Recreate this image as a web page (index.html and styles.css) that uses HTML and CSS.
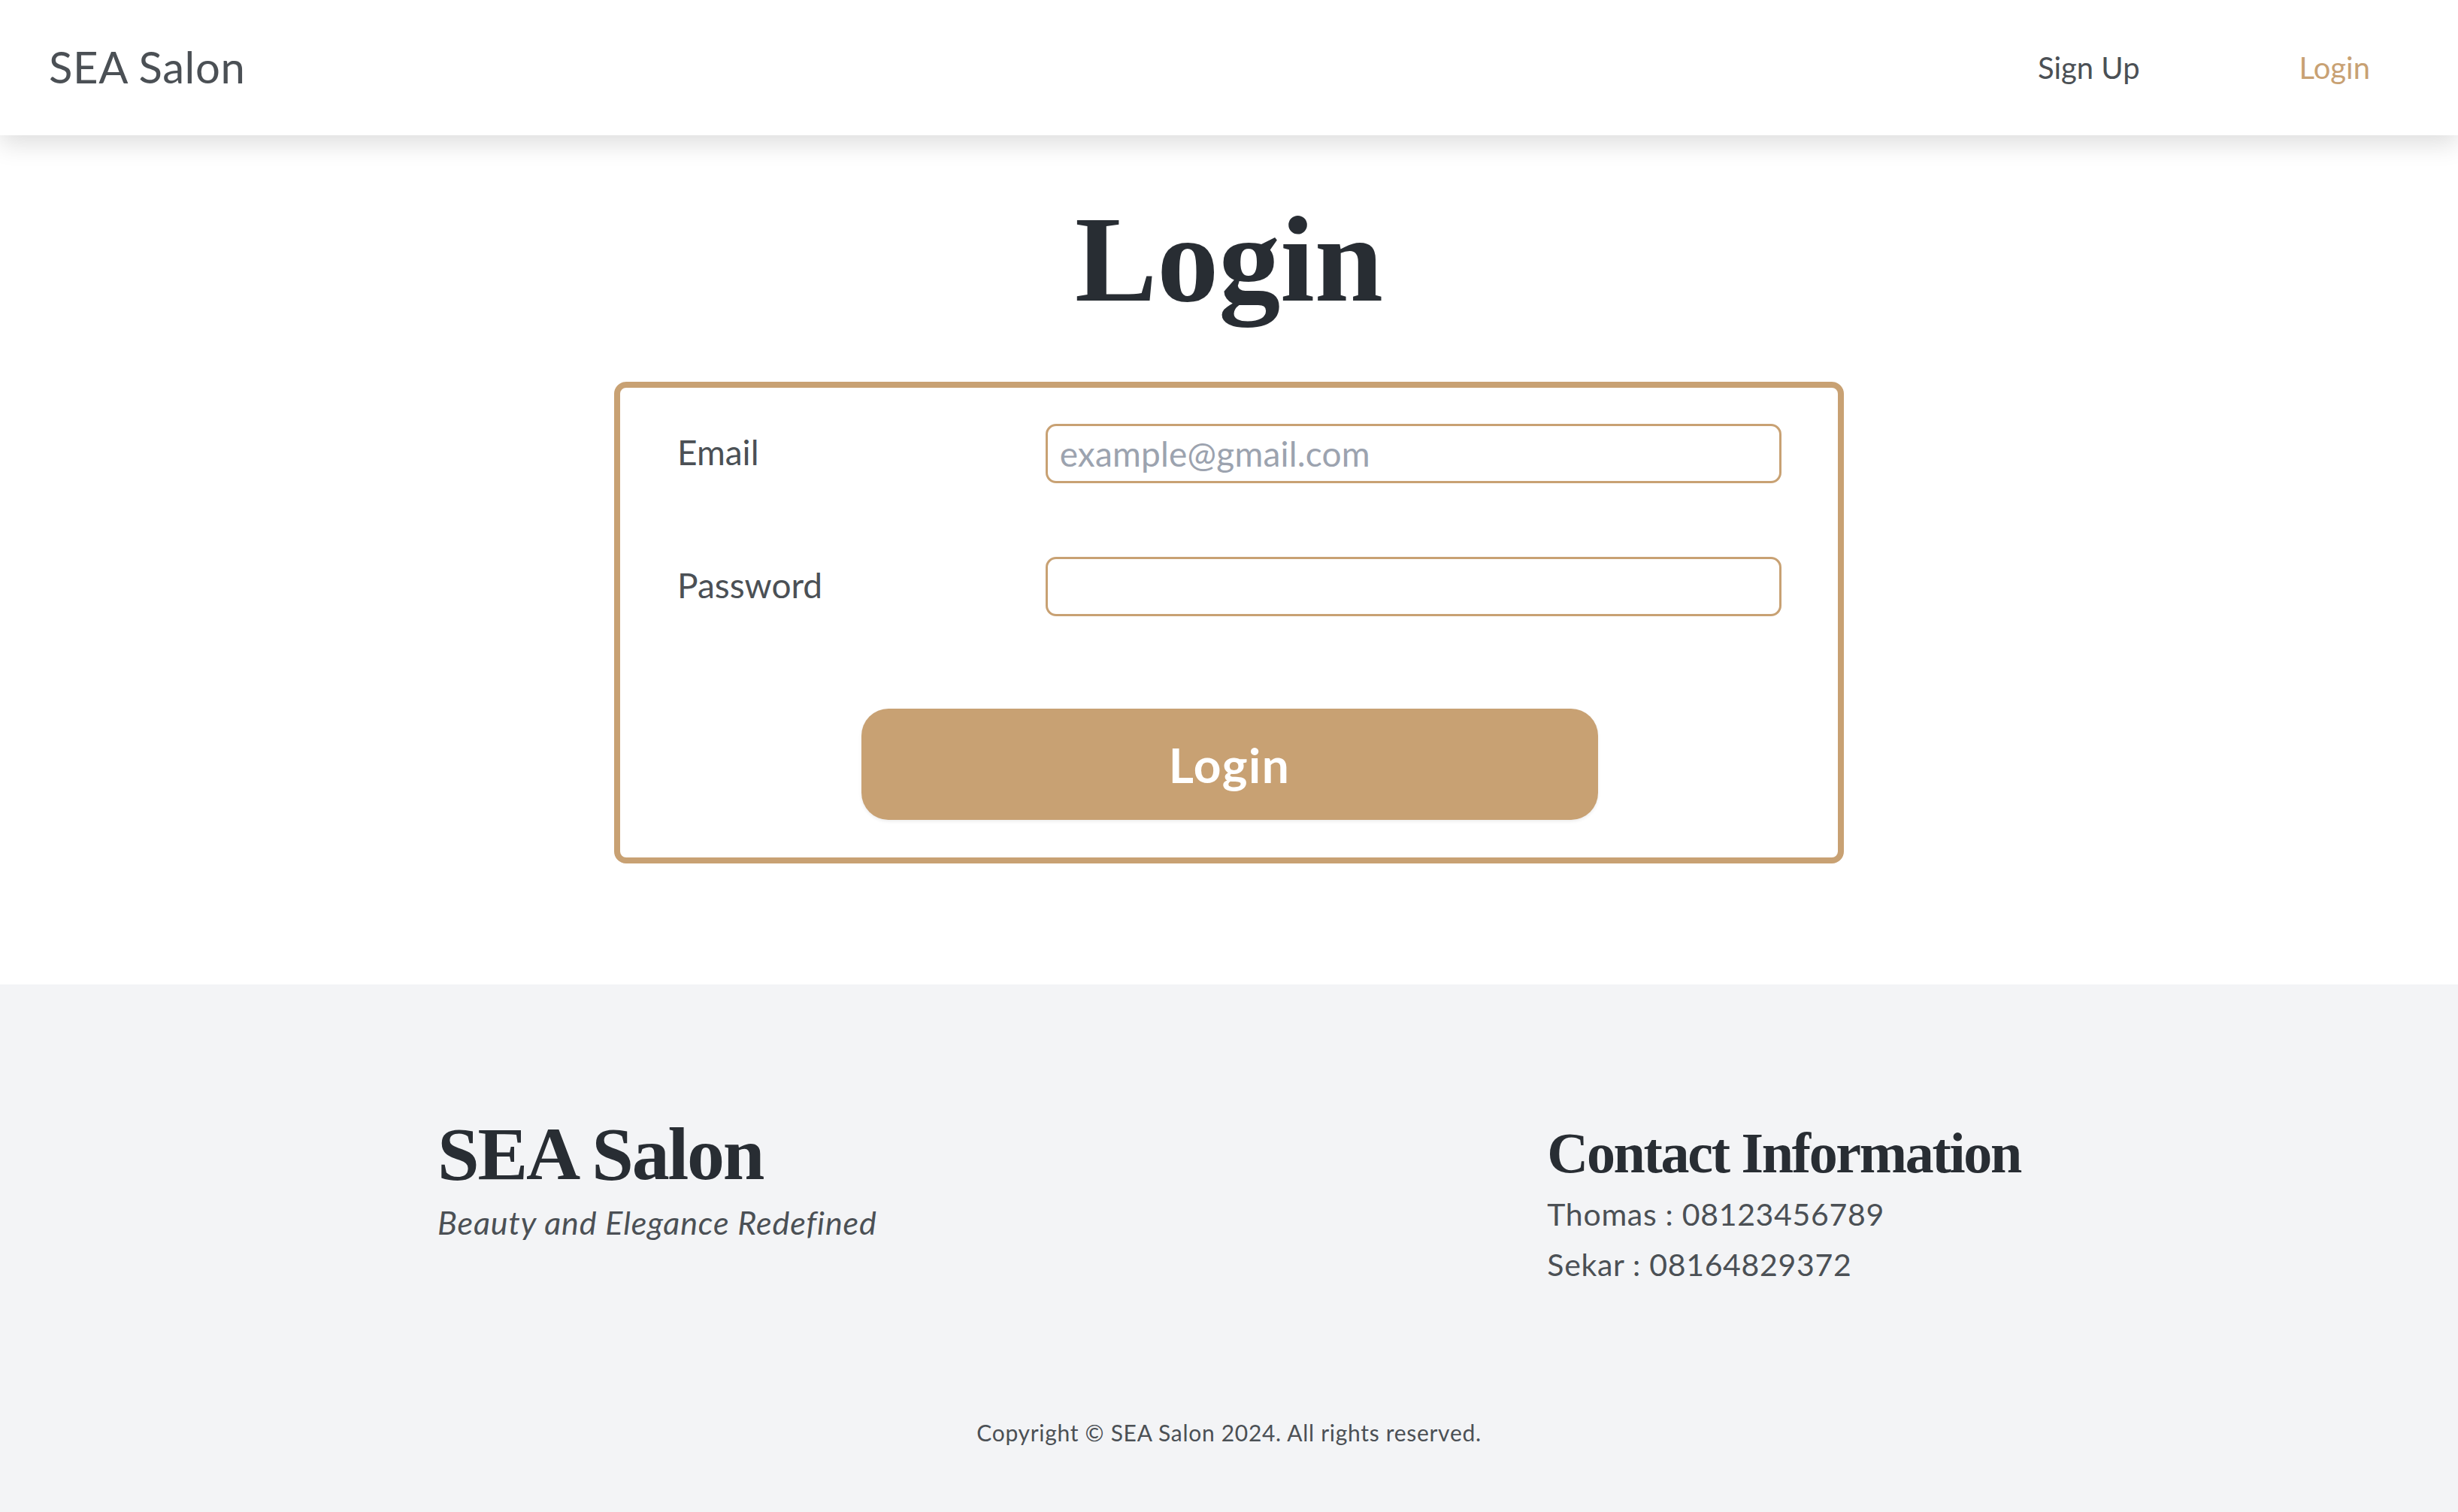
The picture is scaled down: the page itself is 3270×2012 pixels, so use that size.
FILE: index.html
```html
<!DOCTYPE html>
<html lang="en">
<head>
<meta charset="utf-8">
<title>SEA Salon - Login</title>
<link rel="stylesheet" href="styles.css">
</head>
<body>
<header class="nav">
  <a class="brand" href="#">SEA Salon</a>
  <nav class="links">
    <a class="link" href="#">Sign Up</a>
    <a class="link active" href="#">Login</a>
  </nav>
</header>
<main class="main">
  <h1 class="title">Login</h1>
  <form class="card">
    <div class="fields">
      <label class="row">
        <span class="label">Email</span>
        <input class="input" type="email" placeholder="example@gmail.com">
      </label>
      <label class="row">
        <span class="label">Password</span>
        <input class="input" type="password">
      </label>
    </div>
    <button class="btn" type="button">Login</button>
  </form>
</main>
<footer class="footer">
  <div class="footer-cols">
    <div class="about">
      <h2 class="footer-brand">SEA Salon</h2>
      <p class="tagline">Beauty and Elegance Redefined</p>
    </div>
    <div class="contact">
      <h3 class="contact-title">Contact Information</h3>
      <p class="contact-line">Thomas : 08123456789</p>
      <p class="contact-line">Sekar : 08164829372</p>
    </div>
  </div>
  <p class="copyright">Copyright © SEA Salon 2024. All rights reserved.</p>
</footer>
</body>
</html>
```

FILE: styles.css
```css
* { box-sizing: border-box; }
html, body { margin: 0; padding: 0; }
body {
  font-family: Lato, "Open Sans", sans-serif;
  color: #4b5055;
  background: #ffffff;
}
a { text-decoration: none; color: inherit; }

.nav {
  height: 180px;
  display: flex;
  align-items: center;
  justify-content: space-between;
  padding: 0 117px 0 65px;
  background: #fff;
  box-shadow: 0 12px 30px rgba(0, 0, 0, 0.13);
  position: relative;
  z-index: 2;
}
.brand {
  font-size: 58px;
  color: #4b5055;
  letter-spacing: 0.6px;
  line-height: 1;
  margin-top: -3px;
}
.links {
  display: flex;
  gap: 212px;
}
.link {
  font-size: 40px;
  color: #4b5055;
}
.link.active { color: #c8a173; }

.main {
  padding: 83px 0 161px;
}
.title {
  margin: 0 0 81px;
  text-align: center;
  font-family: "Liberation Serif", serif;
  font-weight: 700;
  font-size: 164px;
  line-height: 1;
  color: #282d33;
}
.card {
  width: 1636px;
  margin: 0 auto;
  border: 8px solid #c8a173;
  border-radius: 16px;
  padding: 48px 75px 50px 76px;
}
.fields {
  display: flex;
  flex-direction: column;
  gap: 98px;
}
.row {
  display: grid;
  grid-template-columns: 1fr 2fr;
  align-items: center;
}
.label {
  font-size: 46px;
  color: #4b5055;
  margin-top: -4px;
}
.input {
  height: 79px;
  width: 100%;
  border: 3px solid #c8a173;
  border-radius: 14px;
  padding: 0 16px;
  font-family: Lato, sans-serif;
  font-size: 46px;
  letter-spacing: 0.2px;
  color: #333;
  background: #fff;
  outline: none;
}
.input::placeholder { color: #9ca3af; }
.btn {
  display: block;
  width: 980px;
  height: 148px;
  margin: 123px auto 0;
  border: none;
  border-radius: 36px;
  background: #c8a173;
  color: #fff;
  font-family: Lato, sans-serif;
  font-weight: 700;
  font-size: 64px;
  letter-spacing: 1.5px;
  box-shadow: 0 2px 4px rgba(0,0,0,0.08);
}

.footer {
  background: #f3f4f6;
  padding: 176px 0 85px;
}
.footer-cols {
  width: 2106px;
  margin: 0 auto;
  display: flex;
  justify-content: space-between;
  align-items: flex-start;
}
.footer-brand {
  margin: 0;
  font-family: "Liberation Serif", serif;
  font-weight: 700;
  font-size: 100px;
  letter-spacing: -2.2px;
  line-height: 1;
  color: #282d33;
}
.tagline {
  margin: 11px 0 0;
  font-style: italic;
  font-size: 43px;
  letter-spacing: 0.9px;
  line-height: 60px;
  color: #4b5055;
}
.contact { padding-top: 10px; }
.contact-title {
  margin: 0;
  font-family: "Liberation Serif", serif;
  font-weight: 700;
  font-size: 76px;
  letter-spacing: -2.3px;
  line-height: 1;
  color: #282d33;
}
.contact-line {
  margin: 0;
  font-size: 41px;
  letter-spacing: 0.7px;
  line-height: 67px;
  color: #4b5055;
}
.contact-title + .contact-line { margin-top: 10px; }
.copyright {
  margin: 169px 0 0;
  text-align: center;
  font-size: 30px;
  letter-spacing: 0.7px;
  line-height: 42px;
  color: #4b5055;
}
```
